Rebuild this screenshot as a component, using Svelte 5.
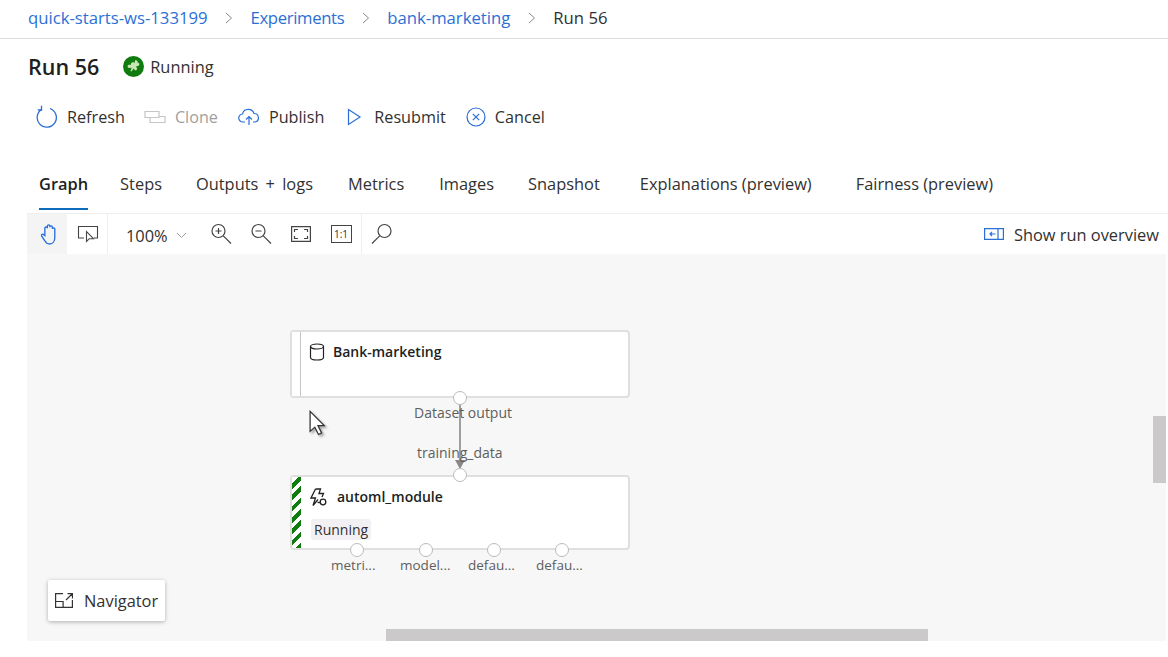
<script>
	const crumbs = ['quick-starts-ws-133199', 'Experiments', 'bank-marketing'];
	const tabs = [
		{ label: 'Graph', gap: 32 },
		{ label: 'Steps', gap: 34 },
		{ label: 'Outputs + logs', gap: 35, spaced: true },
		{ label: 'Metrics', gap: 35 },
		{ label: 'Images', gap: 34 },
		{ label: 'Snapshot', gap: 40 },
		{ label: 'Explanations (preview)', gap: 44 },
		{ label: 'Fairness (preview)', gap: 0 }
	];
	const ports = [
		{ x: 330, label: 'metri...' },
		{ x: 399, label: 'model...' },
		{ x: 467, label: 'defau...' },
		{ x: 535, label: 'defau...' }
	];
</script>

<div class="page">
	<nav class="crumbs">
		{#each crumbs as c}
			<a href="/" class:tight={c === 'Experiments'}>{c}</a>
			<svg class="chev" width="8" height="12" viewBox="0 0 8 12"><path d="M1 1l5.500 5L1 11" fill="none" stroke="#8a8886" /></svg>
		{/each}
		<span>Run 56</span>
	</nav>

	<div class="title">
		<h1>Run 56</h1>
		<span class="status">
			<svg width="21" height="21" viewBox="0 0 21 21">
				<circle cx="10.500" cy="10.500" r="10.500" fill="#107c10" />
				<path d="M12 4.500c1.500-.5 3 .5 2.500 2 1.500 0 2.500 1.500 1.500 2.800-.8 1-2 1-3 .7l1 2.500c.3 1.300-1 2.300-2.300 1.500l-1.200-1.500-2 3-1-.8 1.200-3-2.700.3c-1.500-.3-2-2-.7-3 .8-.5 1.800-.5 2.700 0-.5-1.500.5-3 2-2.800.8 0 1.300.5 1.500 1z" fill="#c8e6b6" />
			</svg>
			Running
		</span>
	</div>

	<div class="actions">
		<button>
			<svg width="22" height="24" viewBox="0 0 22 24" fill="none" stroke="#2b6fd6" stroke-width="1.300"><path d="M14 3.500A9.600 9.600 0 1 1 6 4.200" /><path d="M5.500 .8v4.200H1.800" /></svg>
			Refresh
		</button>
		<button class="off">
			<svg width="22" height="14" viewBox="0 0 22 14" fill="none" stroke="#c8c6c4" stroke-width="1.200"><path d="M1 1.500h14v6H1z" /><path d="M6 7.500v5h15v-6h-6" /></svg>
			Clone
		</button>
		<button>
			<svg width="22" height="18" viewBox="0 0 22 18" fill="none" stroke="#2b6fd6" stroke-width="1.200"><path d="M7 14H5a4 4 0 0 1-.5-8A6 6 0 0 1 16 5.500a4.300 4.300 0 0 1 1 8.500h-2" /><path d="M11 17V9M8 11.500L11 8.500l3 3" /></svg>
			Publish
		</button>
		<button>
			<svg width="21" height="18" viewBox="0 0 21 18" fill="none" stroke="#2b6fd6" stroke-width="1.200"><path d="M4.500 1.500L16 9 4.500 16.500z" /></svg>
			Resubmit
		</button>
		<button>
			<svg width="20" height="20" viewBox="0 0 20 20" fill="none" stroke="#2b6fd6" stroke-width="1.200"><circle cx="10" cy="10" r="9" /><path d="M6.800 6.800l6.400 6.400M13.200 6.800l-6.400 6.400" /></svg>
			Cancel
		</button>
	</div>

	<div class="tabs">
		{#each tabs as t, i}
			<span class="tab" class:active={i === 0} class:spaced={t.spaced} style="margin-right: {t.gap}px">{t.label}</span>
		{/each}
	</div>

	<section class="canvas">
		<div class="tools">
			<div class="group">
				<span class="tool on">
					<svg class="hand" width="17" height="22" viewBox="1 0 16 21" fill="none" stroke="#2b6fd6" stroke-width="1.300"><path d="M5.500 12V5a1.200 1.200 0 0 1 2.400 0V3a1.200 1.200 0 0 1 2.400 0v1a1.200 1.200 0 0 1 2.400 0v1.500a1.200 1.200 0 0 1 2.300 0V14c0 3.500-2 6-5 6-2.500 0-3.500-1-4.500-3L2.500 12.500c-.8-1.500 1-2.500 2-1.300z" /></svg>
				</span>
				<span class="tool">
					<svg class="present" width="22" height="18" viewBox="0 0 22 18" fill="none" stroke="#444" stroke-width="1.100"><path d="M7 13H1.500V1.500h19V13H17" /><path d="M9.500 6.500v10l2.800-2.800h4.200z" /></svg>
				</span>
			</div>
			<div class="zoom">100% <svg width="11" height="7" viewBox="0 0 11 7"><path d="M1 1l4.500 4.500L10 1" fill="none" stroke="#a19f9d" /></svg></div>
			<div class="group">
				<span class="tool">
					<svg width="22" height="22" viewBox="0 0 22 22" fill="none" stroke="#444" stroke-width="1.200"><circle cx="8.500" cy="8" r="6.500" /><path d="M13.300 12.800L21 20.500M8.500 5v6M5.500 8h6" /></svg>
				</span>
				<span class="tool">
					<svg width="22" height="22" viewBox="0 0 22 22" fill="none" stroke="#444" stroke-width="1.200"><circle cx="8.500" cy="8" r="6.500" /><path d="M13.300 12.800L21 20.500M5.500 8h6" /></svg>
				</span>
				<span class="tool">
					<svg width="20" height="16" viewBox="0 0 20 16" fill="none" stroke="#444" stroke-width="1.200"><path d="M.6.600h18.800v14.800H.6z" /><path d="M3.500 6V3.500H7M13 3.500h3.500V6M16.500 10v2.500H13M7 12.500H3.500V10" /></svg>
				</span>
				<span class="tool">
					<span class="ratio">1:1</span>
				</span>
			</div>
			<div class="group last">
				<span class="tool">
					<svg width="22" height="22" viewBox="0 0 22 22" fill="none" stroke="#444" stroke-width="1.200"><circle cx="13.500" cy="8" r="6.500" /><path d="M8.700 12.800L1 20.500" /></svg>
				</span>
			</div>
			<div class="spacer"></div>
			<div class="overview">
				<svg width="20" height="12" viewBox="0 0 20 12" fill="none" stroke="#2b6fd6" stroke-width="1.200"><path d="M.6.600h18.800v10.800H.6zM14 1v10M11.500 6H6M8 4L6 6l2 2" /></svg>
				Show run overview
			</div>
		</div>

		<div class="node data" style="left: 263px; top: 117px; height: 68px">
			<div class="rail"></div>
			<svg class="ico" width="16" height="18" viewBox="0 0 16 18" fill="none" stroke="#222" stroke-width="1.200"><ellipse cx="8" cy="3.500" rx="6.500" ry="2.500" /><path d="M1.500 3.500v11c0 1.400 3 2.500 6.500 2.500s6.500-1.100 6.500-2.500v-11" /></svg>
			<b>Bank-marketing</b>
		</div>

		<div class="edge"></div>
		<div class="head"></div>
		<span class="port" style="left: 426px; top: 178px"></span>
		<span class="lbl" style="left: 387px; top: 190px">Dataset output</span>
		<span class="lbl" style="left: 390px; top: 230px">training_data</span>

		<div class="node auto" style="left: 263px; top: 262px; height: 75px">
			<div class="rail stripes"></div>
			<svg class="ico2" width="18" height="19" viewBox="0 0 18 19" fill="none" stroke="#222" stroke-width="1.300"><path d="M5.500 1L1 10h4.500L3 17.500l5-6M5.500 1h5L9 5.500h4.500L12 9" /><circle cx="13" cy="14" r="2.800" /><path d="M7.500 14.500h2.500" /></svg>
			<b class="auto-name">automl_module</b>
			<span class="chip">Running</span>
		</div>
		<span class="port" style="left: 426px; top: 255px"></span>
		{#each ports as p}
			<span class="port" style="left: {p.x - 7}px; top: 330px"></span>
			<span class="lbl small" style="left: {p.x - 26}px; top: 343px">{p.label}</span>
		{/each}

		<svg class="cursor" width="21" height="28" viewBox="0 0 20 26"><path d="M2 1v19l4.500-4 3.500 7 3-1.500-3.500-7h6z" fill="#fff" stroke="#333" stroke-width="1.200" /></svg>

		<button class="navigator">
			<svg width="18" height="15" viewBox="0 0 18 15" fill="none" stroke="#333" stroke-width="1.200"><path d="M8 .6H.6v13.800h16.800V7M.6 8.500h7.500v6M11 7l6-6M12.500.6h5v5" /></svg>
			Navigator
		</button>

		<div class="thumb-v"></div>
		<div class="thumb-h"></div>
	</section>
</div>

<style>
	:global(body) {
		background: #fff;
	}

	.page {
		width: 1168px;
		height: 657px;
		overflow: hidden;
		font-family: 'Open Sans', 'Liberation Sans', sans-serif;
		font-size: 16.4px;
		color: #323130;
		display: flex;
		flex-direction: column;
	}

	.crumbs {
		height: 39px;
		box-sizing: border-box;
		border-bottom: 1px solid #dcdcdc;
		padding: 0 0 3px 28px;
		display: flex;
		align-items: center;
		gap: 17.5px;
		font-size: 16.7px;
	}

	.crumbs a {
		color: #2b6fd6;
		text-decoration: none;
	}

	.crumbs a.tight {
		letter-spacing: -0.35px;
	}

	.title {
		height: 55px;
		padding-left: 28px;
		display: flex;
		align-items: center;
		gap: 24px;
	}

	h1 {
		margin: 0;
		font-size: 21.5px;
		font-weight: 600;
		color: #201f1e;
	}

	.status {
		display: flex;
		align-items: center;
		gap: 6px;
	}

	.actions {
		height: 46px;
		padding-left: 36px;
		display: flex;
		align-items: center;
		gap: 20px;
		font-size: 16.2px;
	}

	.actions button:first-child {
		margin-right: -1px;
	}

	button {
		font: inherit;
		color: inherit;
		background: none;
		border: none;
		padding: 0;
		display: flex;
		align-items: center;
		gap: 9px;
	}

	.off {
		color: #a19f9d;
	}

	.tabs {
		margin-top: 29px;
		height: 41px;
		padding-left: 39px;
		display: flex;
		align-items: stretch;
	}

	.tab {
		display: flex;
		align-items: center;
		padding-bottom: 12px;
		box-sizing: border-box;
		white-space: nowrap;
	}

	.tab.spaced {
		word-spacing: 3px;
	}

	.tab.active {
		font-weight: 600;
		color: #201f1e;
		border-bottom: 2px solid #0f6cbd;
		padding-bottom: 10px;
	}

	.canvas {
		position: relative;
		margin: 3px 0 0 27px;
		width: 1139px;
		height: 428px;
		background: #f7f7f7;
	}

	.tools {
		height: 40px;
		width: 1141px;
		display: flex;
		background: #fff;
		border-top: 1px solid #eee;
	}

	.group {
		display: flex;
		border-right: 1px solid #eee;
	}

	.group.last {
		border: none;
	}

	.tool {
		width: 40px;
		display: flex;
		align-items: center;
		justify-content: center;
	}

	.tool.on {
		background: #f4f4f4;
	}

	.hand {
		margin-left: 2px;
	}

	.present {
		margin-left: 1px;
	}

	.ratio {
		width: 19px;
		height: 16px;
		border: 1.500px solid #444;
		font-size: 10px;
		line-height: 16px;
		text-align: center;
	}

	.zoom {
		width: 93px;
		padding-left: 18px;
		box-sizing: border-box;
		display: flex;
		align-items: center;
		gap: 8px;
		padding-top: 2px;
	}

	.spacer {
		flex: 1;
	}

	.overview {
		display: flex;
		align-items: center;
		gap: 10px;
		padding-right: 9px;
	}

	.node {
		position: absolute;
		width: 340px;
		box-sizing: border-box;
		background: #fff;
		border: 2px solid #e1dfdd;
		border-radius: 4px;
	}

	.rail {
		position: absolute;
		left: 0;
		top: 0;
		bottom: 0;
		width: 8px;
		border-right: 1.500px solid #c8c6c4;
		background: #fff;
	}

	.stripes {
		border: none;
		width: 9px;
		background: repeating-linear-gradient(-45deg, #107c10 0 4px, #fff 4px 8px);
	}

	.ico {
		position: absolute;
		left: 17px;
		top: 11px;
	}

	.ico2 {
		position: absolute;
		left: 18px;
		top: 11px;
	}

	.node b {
		position: absolute;
		left: 41px;
		top: 10px;
		font-size: 14px;
		font-weight: 600;
		color: #201f1e;
	}

	.node b.auto-name {
		left: 45px;
	}

	.chip {
		position: absolute;
		left: 19px;
		top: 42px;
		padding: 0 3px;
		background: #f3f0f3;
		border-radius: 3px;
		font-size: 14px;
		line-height: 21px;
	}

	.port {
		position: absolute;
		width: 14px;
		height: 14px;
		box-sizing: border-box;
		background: #fff;
		border: 1.500px solid #bdbbb9;
		border-radius: 50%;
	}

	.lbl {
		position: absolute;
		font-size: 14px;
		color: #605e5c;
		white-space: nowrap;
	}

	.lbl.small {
		font-size: 13.5px;
	}

	.edge {
		position: absolute;
		left: 432px;
		top: 190px;
		width: 2px;
		height: 58px;
		background: #a19f9d;
	}

	.head {
		position: absolute;
		left: 428px;
		top: 247px;
		border-left: 5px solid transparent;
		border-right: 5px solid transparent;
		border-top: 9px solid #8a8886;
	}

	.cursor {
		position: absolute;
		left: 281px;
		top: 197px;
		filter: drop-shadow(2px 2px 1px rgba(0, 0, 0, 0.3));
	}

	.navigator {
		position: absolute;
		left: 21px;
		top: 367px;
		width: 117px;
		height: 41px;
		background: #fff;
		border-radius: 2px;
		box-shadow: 0 1px 4px rgba(0, 0, 0, 0.3);
		padding-left: 7px;
		gap: 11px;
	}

	.thumb-v {
		position: absolute;
		right: 0;
		top: 203px;
		width: 13px;
		height: 67px;
		background: #cbc9ca;
	}

	.thumb-h {
		position: absolute;
		left: 359px;
		bottom: 0;
		width: 542px;
		height: 12px;
		background: #cbc9ca;
	}
</style>
